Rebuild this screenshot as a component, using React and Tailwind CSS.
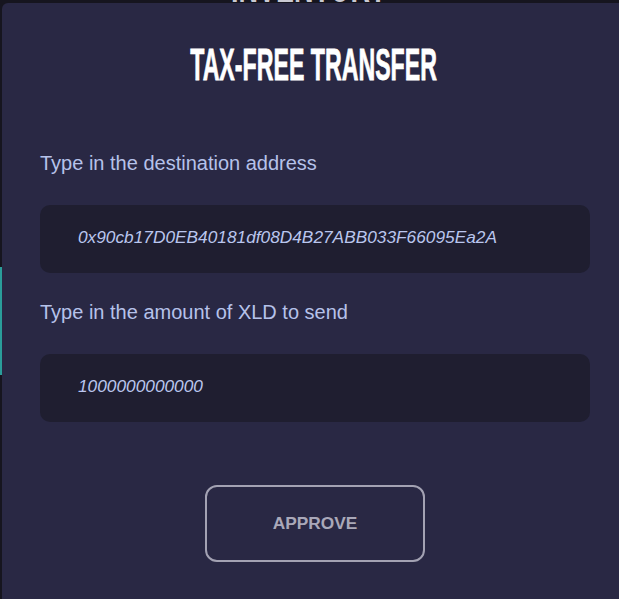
export default function App() {
  return (
    <div className="relative h-[599px] w-[619px] overflow-hidden bg-[#16151f] font-['Liberation_Sans',Arial,sans-serif]">
      {/* background page (mostly hidden behind the modal) */}
      <div className="flex justify-center -mt-[35px] h-[44px] items-end">
        <div className="origin-center scale-x-[0.6] whitespace-nowrap text-[45px] leading-none font-bold text-[#c9c9d2]">
          INVENTORY
        </div>
      </div>
      <div className="mt-[258px] h-[108px] w-[2px] bg-[#2a9d9a]" />

      {/* modal */}
      <div className="absolute left-[2px] top-[3px] w-[624px] h-[620px] rounded-tl-[6px] bg-[#292844] pl-[38px] pr-[36px] pt-[39px]">
        <div className="flex justify-center">
          <h1 className="ml-[-2px] scale-x-[0.515] whitespace-nowrap text-[45px] leading-[45px] font-bold text-white [-webkit-text-stroke:0.8px_white]">
            TAX-FREE TRANSFER
          </h1>
        </div>

        <label className="mt-[64px] block text-[20px] leading-[24px] text-[#b6c2ea]">
          Type in the destination address
        </label>
        <div className="mt-[30px] flex h-[68px] items-center rounded-[10px] bg-[#1f1e30] pl-[38px] pb-[3px]">
          <span className="text-[17.3px] italic text-[#bac6ee]">
            0x90cb17D0EB40181df08D4B27ABB033F66095Ea2A
          </span>
        </div>

        <label className="mt-[27px] block text-[20px] leading-[24px] text-[#b6c2ea]">
          Type in the amount of XLD to send
        </label>
        <div className="mt-[30px] flex h-[68px] items-center rounded-[10px] bg-[#1f1e30] pl-[38px] pb-[3px]">
          <span className="text-[17.3px] italic text-[#bac6ee]">1000000000000</span>
        </div>

        <div className="mt-[63px] flex justify-center">
          <button className="flex h-[77px] w-[220px] items-center justify-center rounded-[12px] border-2 border-[#a3a2b3] text-[17.3px] font-bold text-[#a9a8b9]">
            APPROVE
          </button>
        </div>
      </div>
    </div>
  );
}
